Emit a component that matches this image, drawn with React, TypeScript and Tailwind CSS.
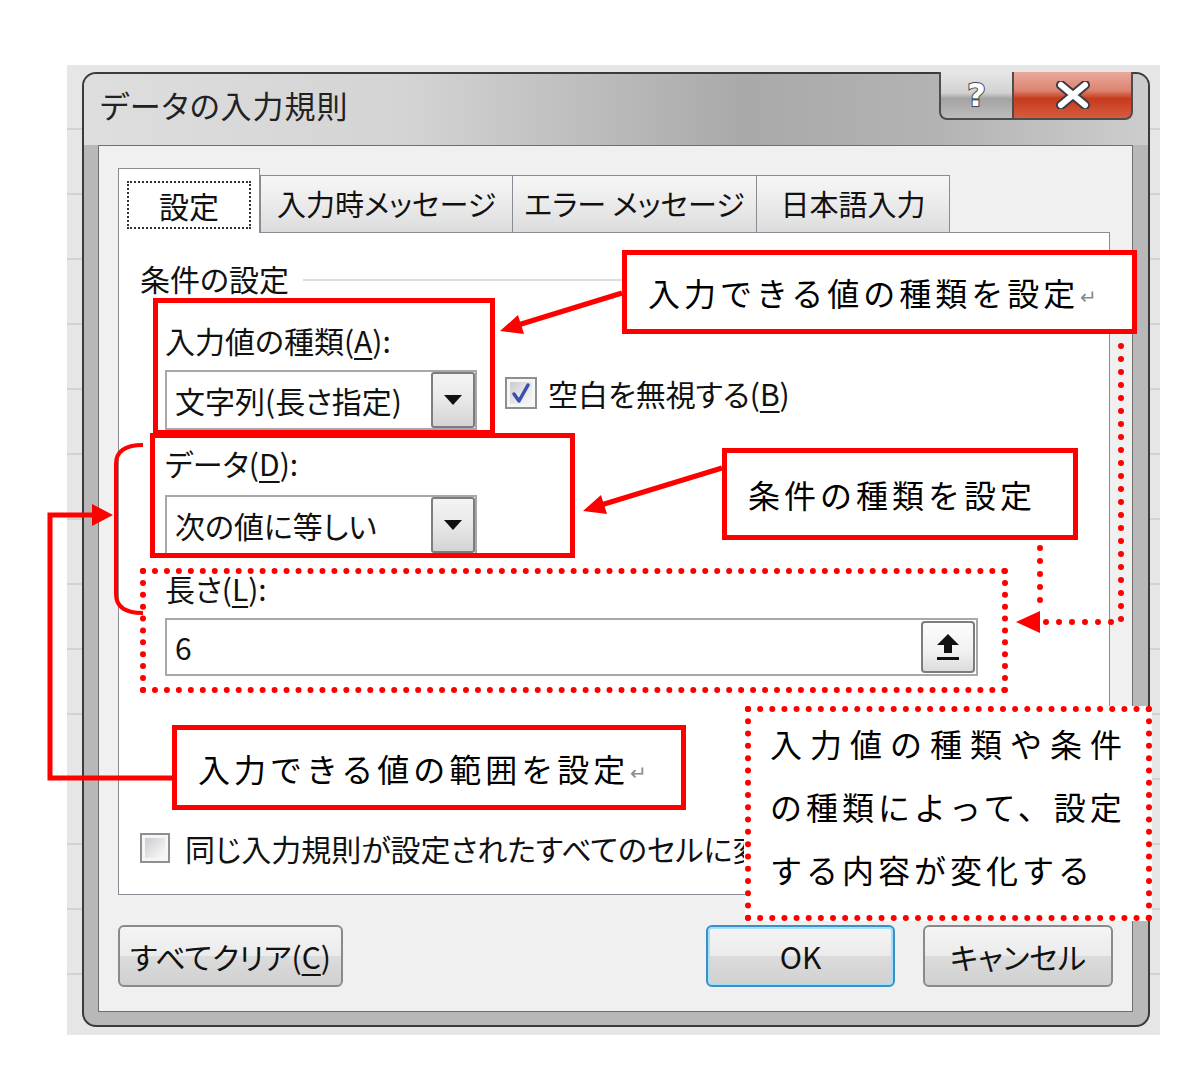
import React from 'react';

const uiFont = "font-['Noto_Sans_CJK_JP','Noto_Sans',sans-serif] [font-feature-settings:'palt']";
const noteFont = "font-['Noto_Sans_CJK_JP',sans-serif] text-[32px] text-black";

function Mn({ c }: { c: string }) {
  return <span className="underline underline-offset-[5px] decoration-[2px]">{c}</span>;
}

function CheckBox({ checked, size }: { checked?: boolean; size: string }) {
  return (
    <div className={`${size} shrink-0 border-[2px] border-[#8e8f8f] bg-[#f6f6f6] p-[3px] flex`}>
      <div className="flex-1 bg-[linear-gradient(135deg,#c9ccd2,#eeeeee_70%,#f8f8f8)] flex items-center justify-center">
        {checked && (
          <svg width="20" height="22" viewBox="0 0 20 22">
            <path d="M3 12 L8 19 L17 3" fill="none" stroke="#3b4fae" strokeWidth="3.5" strokeLinecap="round" strokeLinejoin="round" />
          </svg>
        )}
      </div>
    </div>
  );
}

function Combo({ text }: { text: string }) {
  return (
    <div className="w-[312px] h-[60px] border-[2px] border-[#a8a8a8] bg-white flex">
      <div className="flex-1 flex items-center pl-[8px] text-[30px] text-[#111]">{text}</div>
      <div className="w-[44px] border-[2px] border-[#7d7d7d] rounded-[3px] bg-[linear-gradient(#f4f4f4,#e8e8e8_50%,#d4d4d4)] flex items-center justify-center">
        <svg width="18" height="10" viewBox="0 0 18 10">
          <path d="M0 0 H18 L9 10 Z" fill="#111" />
        </svg>
      </div>
    </div>
  );
}

function DlgButton({ label, w, primary }: { label: React.ReactNode; w: string; primary?: boolean }) {
  return (
    <div
      className={`${w} h-[62px] rounded-[6px] flex items-center justify-center text-[30px] text-[#111] bg-[linear-gradient(#f4f4f4_0%,#ebebeb_50%,#dcdcdc_50%,#d0d0d0_100%)] ${
        primary ? 'border-[2px] border-[#3c8fc4] shadow-[inset_0_0_0_2px_#9fe2fa]' : 'border-[2px] border-[#8a8a8a]'
      }`}
    >
      {label}
    </div>
  );
}

function Tab({ label, w, last }: { label: string; w: string; last?: boolean }) {
  return (
    <div
      className={`${w} h-[57px] border-t border-l ${last ? 'border-r' : ''} border-[#898c95] bg-[linear-gradient(#f6f6f6,#ebebeb_50%,#dcdcdc)] flex items-center justify-center text-[29px] text-[#111]`}
    >
      {label}
    </div>
  );
}

function Window() {
  return (
    <div className={`w-[1068px] h-[955px] rounded-[14px] border-[2px] border-[#3b3b3b] bg-[#b8b8b8] flex flex-col ${uiFont}`}>
      {/* title bar */}
      <div className="h-[71px] rounded-t-[12px] flex justify-between items-start pl-[16px] pr-[15px] bg-[linear-gradient(to_right,#dedede_0%,#d4d4d4_30%,#a9a9a9_62%,#b3b3b3_80%,#cdcdcd_100%)]">
        <div className="mt-[11px] leading-[40px] text-[31px] tracking-[1px] text-[#222]">データの入力規則</div>
        <div className="-mt-[2px] flex h-[48px]">
          <div className="w-[73px] h-[48px] border-[2px] border-r-0 border-t-0 border-[#4d4d4d] rounded-bl-[8px] bg-[linear-gradient(#e6e6e6_0%,#d2d2d2_45%,#a3a3a3_58%,#bdbdbd_100%)] flex items-center justify-center">
            <span className="font-['DejaVu_Sans',sans-serif] font-bold text-[32px] leading-none text-white [-webkit-text-stroke:2px_#3c4656] [paint-order:stroke_fill]">?</span>
          </div>
          <div className="w-[121px] h-[48px] border-[2px] border-t-0 border-[#4d4d4d] rounded-br-[8px] bg-[linear-gradient(#eaa99c_0%,#dc8470_40%,#c63a1d_58%,#d65c40_100%)] flex items-center justify-center">
            <svg width="34" height="28" viewBox="0 0 34 28">
              <path d="M5 4 L29 24 M29 4 L5 24" stroke="#3c3c44" strokeWidth="10" strokeLinecap="round" />
              <path d="M5 4 L29 24 M29 4 L5 24" stroke="#fff" strokeWidth="6" strokeLinecap="round" />
            </svg>
          </div>
        </div>
      </div>

      {/* client */}
      <div className="ml-[14px] mr-[15px] h-[867px] border border-[#6f6f6f] bg-[#f0f0f0] pt-[22px] px-[19px]">
        <div className="flex items-end h-[64px]">
          <div className="w-[142px] h-[65px] -mb-px relative z-10 bg-white border-t border-l border-r border-[#898c95] px-[8px] pt-[12px]">
            <div className="h-[48px] border-[2px] border-dotted border-[#333] flex items-center justify-center text-[30px] text-[#111]">設定</div>
          </div>
          <Tab label="入力時メッセージ" w="w-[252px]" />
          <Tab label="エラー メッセージ" w="w-[244px]" />
          <Tab label="日本語入力" w="w-[194px]" last />
        </div>

        <div className="w-[992px] h-[663px] border border-[#898c95] bg-white text-[30px] text-[#111]">
          <div className="mt-[25px] pl-[21px] flex items-center">
            <span className="leading-[40px]">条件の設定</span>
            <div className="flex-1 h-[2px] bg-[#d5dfe5] ml-[14px] mr-[18px] mt-[4px]" />
          </div>
          <div className="pl-[46px]">
            <div className="mt-[22px] leading-[40px]">
              入力値の種類(<Mn c="A" />):
            </div>
            <div className="mt-[10px] flex items-start">
              <Combo text="文字列(長さ指定)" />
              <div className="mt-[3px] ml-[28px] h-[40px] flex items-center">
                <CheckBox checked size="w-[32px] h-[32px]" />
                <span className="ml-[11px] leading-[40px]">
                  空白を無視する(<Mn c="B" />)
                </span>
              </div>
            </div>
            <div className="mt-[13px] leading-[40px]">
              データ(<Mn c="D" />):
            </div>
            <div className="mt-[12px]">
              <Combo text="次の値に等しい" />
            </div>
            <div className="mt-[13px] leading-[40px]">
              長さ(<Mn c="L" />):
            </div>
            <div className="mt-[10px] w-[813px] h-[58px] border-[2px] border-[#a8a8a8] bg-white flex items-center justify-between pl-[8px] pr-[1px]">
              <span>6</span>
              <div className="w-[54px] h-[52px] border-[2px] border-[#7d7d7d] rounded-[4px] bg-[linear-gradient(#fdfdfd,#f1f1f1_60%,#dcdcdc)] flex items-center justify-center">
                <svg width="26" height="30" viewBox="0 0 26 30">
                  <path d="M13 2 L24 13 H17 V21 H9 V13 H2 Z" fill="#111" />
                  <rect x="2" y="25" width="22" height="3" fill="#111" />
                </svg>
              </div>
            </div>
          </div>
          <div className="mt-[152px] pl-[21px] h-[40px] flex items-center">
            <CheckBox size="w-[30px] h-[30px]" />
            {/* the right part of this label lies under the callout box */}
            <span className="ml-[15px] w-[559px] overflow-hidden whitespace-nowrap">同じ入力規則が設定されたすべてのセルに変更を適用する</span>
          </div>
        </div>

        <div className="mt-[30px] flex justify-between">
          <DlgButton w="w-[225px]" label={<span>すべてクリア(<Mn c="C" />)</span>} />
          <div className="flex gap-[28px]">
            <DlgButton w="w-[189px]" label="OK" primary />
            <DlgButton w="w-[190px]" label="キャンセル" />
          </div>
        </div>
      </div>
    </div>
  );
}

function Annotations() {
  const red = '#ff0000';
  const dots = { stroke: red, strokeWidth: 6, strokeLinecap: 'round' as const, strokeDasharray: '0 13', fill: 'none' };
  return (
    <>
      {/* field frames */}
      <div className="absolute left-[153px] top-[298px] w-[342px] h-[137px] border-[5px] border-[#ff0000]" />
      <div className="absolute left-[150px] top-[433px] w-[425px] h-[125px] border-[5px] border-[#ff0000]" />
      <div className="absolute left-[140px] top-[568px] w-[868px] h-[125px] border-[6px] border-dotted border-[#ff0000]" />

      {/* callouts */}
      <div className="absolute left-[622px] top-[250px] w-[515px] h-[84px] border-[5px] border-[#ff0000] bg-white flex items-center pl-[21px]">
        <span className={`${noteFont} leading-none tracking-[4px]`}>入力できる値の種類を設定</span>
        <span className="text-[20px] text-[#8a8a8a] leading-none mt-[10px] ml-[1px]">↵</span>
      </div>
      <div className="absolute left-[722px] top-[448px] w-[356px] h-[92px] border-[5px] border-[#ff0000] bg-white flex items-center pl-[21px]">
        <span className={`${noteFont} leading-none tracking-[4px]`}>条件の種類を設定</span>
      </div>
      <div className="absolute left-[172px] top-[725px] w-[514px] h-[85px] border-[5px] border-[#ff0000] bg-white flex items-center pl-[21px]">
        <span className={`${noteFont} leading-none tracking-[4px]`}>入力できる値の範囲を設定</span>
        <span className="text-[20px] text-[#8a8a8a] leading-none mt-[10px] ml-[1px]">↵</span>
      </div>
      <div className="absolute left-[745px] top-[706px] w-[407px] h-[215px] border-[6px] border-dotted border-[#ff0000] bg-white pl-[19px] flex flex-col">
        <span className={`${noteFont} leading-[63px] tracking-[8px] whitespace-nowrap`}>入力値の種類や条件</span>
        <span className={`${noteFont} leading-[63px] tracking-[4px] whitespace-nowrap`}>の種類によって、設定</span>
        <span className={`${noteFont} leading-[63px] tracking-[4px] whitespace-nowrap`}>する内容が変化する</span>
      </div>

      {/* lines and arrows */}
      <svg className="absolute left-0 top-0 pointer-events-none" width="1200" height="1068" viewBox="0 0 1200 1068">
        <line x1="622" y1="293" x2="518" y2="325" stroke={red} strokeWidth="5" />
        <path d="M500 331 L524 334 L518 315 Z" fill={red} />
        <line x1="722" y1="468" x2="601" y2="505" stroke={red} strokeWidth="5" />
        <path d="M583 511 L607 514 L601 495 Z" fill={red} />

        <path d="M1121 346 V622 H1044" {...dots} />
        <path d="M1040 548 V610" {...dots} />
        <path d="M1016 622 L1040 611 L1040 633 Z" fill={red} />

        <path d="M143 445 Q116 445 116 464 L116 594 Q116 613 143 613" fill="none" stroke={red} strokeWidth="4" />
        <path d="M172 778 L50 778 L50 515 L94 515" fill="none" stroke={red} strokeWidth="5" />
        <path d="M113 515 L92 504 L92 526 Z" fill={red} />
      </svg>
    </>
  );
}

export default function App() {
  return (
    <div className="relative w-[1200px] h-[1068px] bg-white overflow-hidden">
      <div className="pt-[65px] pl-[67px]">
        <div className="w-[1093px] h-[970px] bg-[repeating-linear-gradient(to_bottom,#e6e6e6_0px,#e6e6e6_63px,#d2d2d2_63px,#d2d2d2_65px)] pt-[7px] pl-[15px]">
          <Window />
        </div>
      </div>
      <Annotations />
    </div>
  );
}
